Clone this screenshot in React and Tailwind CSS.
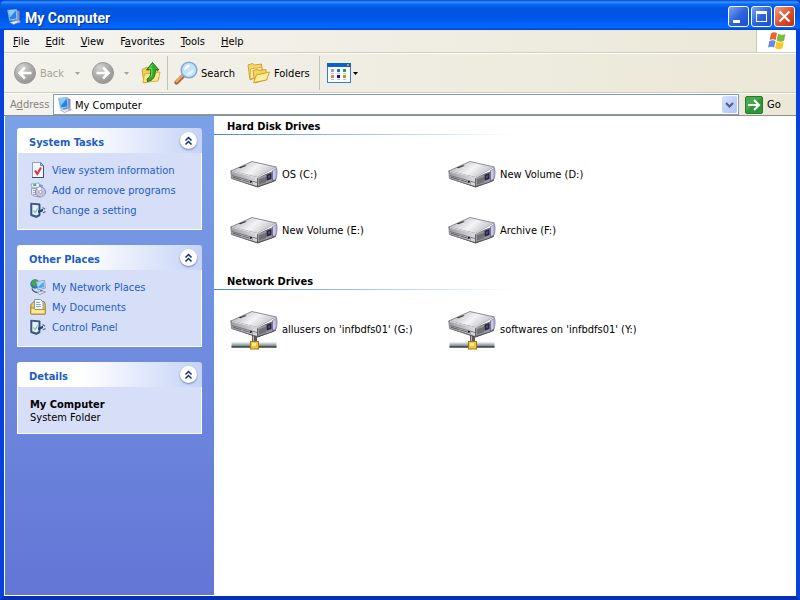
import React, { useState } from 'react';

const TASK_GROUPS = [
  {
    title: 'System Tasks',
    links: [
      { label: 'View system information', Icon: InfoIcon },
      { label: 'Add or remove programs', Icon: ProgramsIcon },
      { label: 'Change a setting', Icon: SettingIcon }
    ]
  },
  {
    title: 'Other Places',
    links: [
      { label: 'My Network Places', Icon: NetworkIcon },
      { label: 'My Documents', Icon: DocumentsIcon },
      { label: 'Control Panel', Icon: SettingIcon }
    ]
  }
];

const DRIVE_GROUPS = [
  { title: 'Hard Disk Drives', drives: ['OS (C:)', 'New Volume (D:)', 'New Volume (E:)', 'Archive (F:)'] },
  { title: 'Network Drives', network: true, drives: ["allusers on 'infbdfs01' (G:)", "softwares on 'infbdfs01' (Y:)"] }
];

// [before, underlined letter, after]
const MENUS = [
  ['', 'F', 'ile'],
  ['', 'E', 'dit'],
  ['', 'V', 'iew'],
  ['F', 'a', 'vorites'],
  ['', 'T', 'ools'],
  ['', 'H', 'elp']
];

function ComputerIcon() {
  return (
    <svg width="16" height="16" viewBox="0 0 16 16" className="shrink-0" aria-hidden="true">
      <path d="m10 1 3.500 1v9.500L10 12z" fill="#7f93bd" />
      <path d="M1.500 1.200 10.500.3l1 10.200-8 1z" fill="#c3dcf5" stroke="#6f9ad0" strokeWidth=".6" />
      <path d="m2.500 2.200 7.200-.8.8 8.200-6.500.8z" fill="#2583ea" />
      <path d="m2.500 2.200 7.200-.8L4 8.500z" fill="#86ccff" />
      <path d="m6 11 4-.5.5 1.700-4 .8z" fill="#7b89ad" />
      <path d="m3.500 13.200 8-1.800 3 1.300-7 2.800z" fill="#e9ecf6" stroke="#7d86ad" strokeWidth=".6" />
      <circle cx="12.500" cy="12.500" r="1.500" fill="#c0aecd" />
    </svg>
  );
}

function WindowsFlag() {
  return (
    <svg width="20" height="20" viewBox="0 0 20 20" aria-hidden="true">
      <path d="M4 2.500c2-1.500 4-1.400 6-.3L8.700 9C6.700 7.800 4.700 8 2.600 9z" fill="#f0602c" />
      <path d="M11 2.700c2.500 1.400 4.700 1.400 7.500.2L17 9.800c-2.500 1.300-5 1-7.300-.4z" fill="#7cbc3c" />
      <path d="M2.400 10C4.500 9 6.500 8.900 8.500 10l-1.400 6.500c-2-1.200-4-1.100-6.100 0z" fill="#5b8fe6" />
      <path d="M9.500 10.400c2.400 1.400 4.800 1.600 7.300.4l-1.400 6.500c-2.700 1.300-5 1.200-7.300-.3z" fill="#fbc625" />
    </svg>
  );
}

function RoundArrow({ back }) {
  return (
    <svg width="24" height="24" viewBox="0 0 24 24" aria-hidden="true">
      <defs>
        <radialGradient id={back ? 'gb' : 'gf'} cx=".35" cy=".25" r=".8">
          <stop offset="0" stopColor="#d2d2d0" />
          <stop offset=".6" stopColor="#a9a9a7" />
          <stop offset="1" stopColor="#939391" />
        </radialGradient>
      </defs>
      <circle cx="12" cy="12" r="10.500" fill={back ? 'url(#gb)' : 'url(#gf)'} stroke="#9a9a97" />
      <path
        d={back ? 'M18.500 12H7M12 6.500 6.500 12l5.500 5.500' : 'M5.500 12H17M12 6.500l5.500 5.500-5.500 5.500'}
        fill="none"
        stroke="#fff"
        strokeWidth="2.600"
      />
    </svg>
  );
}

function Caret({ className }) {
  return (
    <svg width="5" height="3" viewBox="0 0 5 3" className={className} aria-hidden="true">
      <path d="M0 0h5L2.500 3z" fill="currentColor" />
    </svg>
  );
}

function UpFolderIcon() {
  return (
    <svg width="22" height="24" viewBox="0 0 22 24" aria-hidden="true">
      <path d="M2 8.500 7 6l1.500 1.500L17 7l2 11-15 4z" fill="#f1cf55" stroke="#c79722" strokeWidth=".8" />
      <path d="m3 21.500 1.500-8.500 15.500-2-2 9z" fill="#ffe88a" stroke="#cf9f27" strokeWidth=".8" />
      <path d="M7.500 20.500c5.500-1 8-4.500 7.800-11.500H19L12.500 1.500 6.500 9l4.200-.3C10.800 13.500 10.500 16 7 18z" fill="#2fae2b" stroke="#126d16" strokeWidth=".9" />
      <path d="m12.500 3.500-3.500 4.300 2.800-.2c.2 3.500.1 6-1 8.200" fill="none" stroke="#7edc68" strokeWidth="1" />
    </svg>
  );
}

function SearchIcon() {
  return (
    <svg width="24" height="24" viewBox="0 0 24 24" aria-hidden="true">
      <path d="m10 14-7.500 7.500" stroke="#a9663a" strokeWidth="4.200" strokeLinecap="round" />
      <path d="m9.500 13.500-7 7" stroke="#eba66c" strokeWidth="2.200" strokeLinecap="round" />
      <circle cx="15" cy="9" r="7.800" fill="#c2e4fb" stroke="#7fa9dd" strokeWidth="1.600" />
      <path d="M10 9a5.500 5.500 0 0 1 6-5.300c-1 3-3 5-6 5.300z" fill="#fff" />
      <path d="M12 14c4 1 7-1 8-5-1 0-6 1-8 5z" fill="#e6f6ff" />
    </svg>
  );
}

function FoldersIcon() {
  return (
    <svg width="24" height="24" viewBox="0 0 24 24" aria-hidden="true">
      <path d="M1 4 5.500 2.500l2 1.500 7-1 1 11L3 19z" fill="#f6d869" stroke="#c99b28" strokeWidth=".9" />
      <path d="m3 18 .5-10L15 6l-1 9z" fill="#ffeb9b" stroke="#d0a438" strokeWidth=".8" />
      <path d="m6 10 4-2 2 1.500 7-1 1 10-12 3.500z" fill="#f4d260" stroke="#c99b28" strokeWidth=".9" />
      <path d="m6.500 21.500 3-7.500L22.500 11l-3 8z" fill="#ffec9d" stroke="#cb9a25" strokeWidth=".9" />
    </svg>
  );
}

function ViewsIcon() {
  return (
    <svg width="24" height="20" viewBox="0 0 24 20" shapeRendering="crispEdges" aria-hidden="true">
      <rect width="24" height="20" rx="1" fill="#3a7bd0" />
      <rect width="24" height="4" fill="#0c62cc" />
      <rect x="20" y="1" width="2" height="2" fill="#e88458" />
      <rect x="1" y="4" width="22" height="15" fill="#fbfdff" />
      <rect x="4" y="6" width="3" height="3" fill="#8aa6d8" />
      <rect x="10" y="6" width="3" height="3" fill="#2b6ed2" />
      <rect x="16" y="6" width="3" height="3" fill="#2f9d43" />
      <rect x="4" y="12" width="3" height="3" fill="#f08050" />
      <rect x="10" y="12" width="3" height="3" fill="#1c1478" />
      <rect x="16" y="12" width="3" height="3" fill="#b59e1c" />
      <path d="M4 10.500h3M10 10.500h3M16 10.500h3M4 16.500h3M10 16.500h3M16 16.500h3" stroke="#b9c1d2" />
    </svg>
  );
}

function GoIcon() {
  return (
    <svg width="18" height="18" viewBox="0 0 18 18" aria-hidden="true">
      <rect x=".5" y=".5" width="17" height="17" rx="1.500" fill="#2e9638" stroke="#257a2c" />
      <path d="M1 1h16L1 15z" fill="#58b35c" opacity=".6" />
      <path d="M3 9h10.500M9 4l5 5-5 5" fill="none" stroke="#fff" strokeWidth="2" />
    </svg>
  );
}

function InfoIcon() {
  return (
    <svg width="16" height="16" viewBox="0 0 16 16" className="shrink-0" aria-hidden="true">
      <path d="M2.500.5h8l3 3v12h-11z" fill="#f4f8ff" stroke="#8aa0c8" />
      <path d="M10.500.5v3h3z" fill="#a9c3ea" stroke="#4a6fae" strokeWidth=".8" />
      <path d="M2 15.500h12M13.500 4v11" stroke="#35517f" />
      <path d="m5 8.500 2.300 3.500L11 5.500" fill="none" stroke="#e0373b" strokeWidth="2.200" />
    </svg>
  );
}

function ProgramsIcon() {
  return (
    <svg width="16" height="16" viewBox="0 0 16 16" className="shrink-0" aria-hidden="true">
      <path d="m1 2 8-1 1 4-8 1z" fill="#eef5fb" stroke="#7c98bb" strokeWidth=".7" />
      <path d="m3 2.500 3-.4.5 1.700-3 .4z" fill="#43a35c" />
      <path d="m9 2 4 1-1 4-3-1z" fill="#6ea5e2" />
      <path d="M1.500 6.500h8v8.500l-6-1-2-2z" fill="#e8eef5" stroke="#79889f" strokeWidth=".7" />
      <path d="M3 8.500h4M3 10.500h4M3 12.500h3" stroke="#8996a8" strokeWidth=".8" />
      <circle cx="10.500" cy="10" r="5" fill="#cdbfe6" stroke="#7f7aa7" strokeWidth=".8" />
      <path d="M10.500 10 7 6.500A5 5 0 0 1 11 5z" fill="#f6f2ff" />
      <path d="m10.500 10 4.300 2A5 5 0 0 1 11 15z" fill="#a6d5c1" />
      <circle cx="10.500" cy="10" r="1.500" fill="#fff" stroke="#7f7aa7" strokeWidth=".6" />
    </svg>
  );
}

function SettingIcon() {
  return (
    <svg width="16" height="16" viewBox="0 0 16 16" className="shrink-0" aria-hidden="true">
      <path d="M.8 1.200 10 2v11.500L6.500 15.500l-5.700-2z" fill="#3e5c93" stroke="#29406d" strokeWidth=".8" />
      <path d="m2.300 2.700 6.200.6v9l-2 1.200-4.200-1.300z" fill="#e2f1fc" />
      <path d="m3.500 8.500 1.700 2L7.500 6.500" fill="none" stroke="#7cc07f" strokeWidth="1.100" />
      <path d="M8 9.700c2 0 3-1.500 5-1.500" stroke="#27406f" strokeWidth="2.200" fill="none" />
      <path d="m12.500 5.500 2.500 1.800M13 10.800l2.500-1.300" fill="none" stroke="#516da3" strokeWidth="1.400" />
    </svg>
  );
}

function NetworkIcon() {
  return (
    <svg width="16" height="16" viewBox="0 0 16 16" className="shrink-0" aria-hidden="true">
      <circle cx="5" cy="5" r="4.700" fill="#2c74bd" />
      <path d="M1.500 2.500C3 .5 6 0 8 2L6 4.500 5 8 2 6z" fill="#47a744" />
      <path d="m6 2.500 8.500-1 .9 7.500L8 11z" fill="#dce8f5" stroke="#7188ab" strokeWidth=".7" />
      <path d="m7.200 3.500 6.500-.8.6 5.500-5.800 1.300z" fill="#4faaf1" />
      <path d="m7.200 3.500 6.500-.8-5.500 5z" fill="#a8e0ff" />
      <path d="M10 11h2.500v1.500H10z" fill="#6f7fa3" />
      <path d="m7 13.500 6-1.500 2.500 1-6 2.500z" fill="#edeef6" stroke="#747ba0" strokeWidth=".7" />
      <path d="M2 9.500c.5 2 2 3.200 5 4" fill="none" stroke="#4d5c7b" strokeWidth="1.300" />
    </svg>
  );
}

function DocumentsIcon() {
  return (
    <svg width="16" height="16" viewBox="0 0 16 16" className="shrink-0" aria-hidden="true">
      <path d="M.8 5.500 4 2.500h10L15.200 5v10H.8z" fill="#f2c955" stroke="#8f7326" strokeWidth=".9" />
      <path d="M4.500.5h6L13 3v9H4.500z" fill="#fff" stroke="#6c8fc2" strokeWidth=".9" />
      <path d="M6 3.500h4M6 5.500h5M6 7.500h5" stroke="#6fa1dd" strokeWidth=".9" />
      <path d="M.8 9h3l1.200 1.500h10.200V15H.8z" fill="#ffe895" stroke="#a5842c" strokeWidth=".9" />
    </svg>
  );
}

function DriveIcon({ network }) {
  return (
    <svg width="48" height={network ? 42 : 28} viewBox={network ? '0 -3 48 42' : '0 -1 48 28'} className="shrink-0" aria-hidden="true">
      <defs>
        <linearGradient id="driveTop" x1="0" y1="0" x2="1" y2=".4">
          <stop offset="0" stopColor="#a9a9ad" />
          <stop offset=".6" stopColor="#f4f4f6" />
          <stop offset="1" stopColor="#c2c2c8" />
        </linearGradient>
        <linearGradient id="driveLeft" x1="0" y1="0" x2="1" y2="0">
          <stop offset="0" stopColor="#9d9da2" />
          <stop offset="1" stopColor="#dcdce0" />
        </linearGradient>
        <linearGradient id="bar" x1="0" y1="0" x2="0" y2="1">
          <stop offset="0" stopColor="#f4f6f7" />
          <stop offset="1" stopColor="#5f6b70" />
        </linearGradient>
      </defs>
      {network && (
        <g>
          <rect x="22" y="22" width="5" height="9" fill="#59595d" />
          <rect x="23" y="22" width="1" height="9" fill="#b9b9bd" />
          <path d="M1.500 31h45v5h-45z" fill="url(#bar)" />
          <path d="M1.500 36h45" stroke="#3d4649" strokeWidth="1.500" />
          <rect x="20.500" y="30.500" width="8" height="7.500" fill="#f3c62e" stroke="#a1781a" />
          <path d="M22 32h4v3h-4z" fill="#fff0a0" />
        </g>
      )}
      <path d="m1 17.500 26.500 9L45.500 20l1-3.500L28 22z" fill="#3f3f44" />
      {/* left side */}
      <path d="M.8 10 27.500 16.500v9L1.500 17.500z" fill="url(#driveLeft)" stroke="#6c6c72" strokeWidth=".7" />
      <path d="m2 14.500 25 7" stroke="#707076" strokeWidth=".9" />
      <path d="m3 16.200 20 6" stroke="#4a4a50" strokeWidth=".8" strokeDasharray="9 1" />
      <path d="M20 20.700h2" stroke="#222" strokeWidth="1.400" />
      {/* front side */}
      <path d="m27.500 16.500 15-5.700v10l-15 4.700z" fill="#98989e" stroke="#4c4c52" strokeWidth=".7" />
      <path d="m29 18.300 7-2.600v5.500L29 23.500z" fill="#707076" />
      <path d="m36.500 13.800 5-1.800v6l-5 1.700z" fill="#25253c" />
      <path d="m38 14.800 2-.8v2.700l-2 .7z" fill="#4f4a78" />
      <path d="M42.500 9.500 46.500 7c1 3 .8 8-.8 11.500l-3.200 1.700z" fill="#b4b2d6" stroke="#625f8a" strokeWidth=".6" />
      <path d="M44 9.500v8.500" stroke="#e1e0f4" strokeWidth="1" />
      {/* top */}
      <path d="m.8 10 21-9.500L46.500 6 27.500 16.500z" fill="url(#driveTop)" stroke="#75757b" strokeWidth=".8" />
      <path d="m2 10.500 25.500 6.300L45.500 7" fill="none" stroke="#fafafc" strokeWidth=".8" />
      <path d="m8.500 6.800 6.500-2.500 1.700.5-6.500 2.500z" fill="#2e2e32" />
    </svg>
  );
}

function CaptionButton({ label, close, children }) {
  return (
    <button
      aria-label={label}
      className={`flex h-[21px] w-[21px] items-center justify-center rounded-[3px] border border-white
        ${close
          ? 'bg-linear-to-br from-[#f0a08a] via-[#e0502c] to-[#b83414]'
          : 'bg-linear-to-br from-[#7ba2f4] via-[#2f63dd] to-[#1c4ccb]'}`}
    >
      <svg width="19" height="19" viewBox="0 0 19 19" aria-hidden="true">{children}</svg>
    </button>
  );
}

function TaskPanel({ title, children }) {
  const [open, setOpen] = useState(true);

  return (
    <section>
      <h2 className="flex h-[25px] items-center justify-between rounded-t-[3px] bg-linear-to-r from-white from-35% to-[#c6d3f7] pr-[5px] pl-3 text-[11px] font-bold text-[#215dc6]">
        <span className="pt-1">{title}</span>
        <button
          onClick={() => setOpen(!open)}
          aria-label={`Toggle ${title}`}
          className="flex h-[17px] w-[17px] items-center justify-center rounded-full bg-white shadow-[0_1px_2px_#7080b0]"
        >
          <svg width="9" height="10" viewBox="0 0 9 10" className={open ? '' : 'rotate-180'} aria-hidden="true">
            <path d="m1.500 4.500 3-3 3 3M1.500 8.500l3-3 3 3" fill="none" stroke="#12307d" strokeWidth="1.500" />
          </svg>
        </button>
      </h2>
      {open && <div className="border border-t-0 border-white bg-[#d6dff7]">{children}</div>}
    </section>
  );
}

export default function App() {
  const [address, setAddress] = useState('My Computer');

  return (
    <div className="flex min-h-screen flex-col bg-[#0a3fe0] font-['DejaVu_Sans_Condensed','DejaVu_Sans',sans-serif] text-[11px] leading-[13px] text-black">
      {/* Title bar */}
      <header className="flex h-[30px] shrink-0 items-center rounded-t-md bg-[linear-gradient(180deg,#0046cc_0%,#3a93ff_7%,#0a6af5_14%,#0055e0_28%,#0054e3_55%,#0062fa_78%,#0066ff_92%,#0040c8_100%)] pt-[3px] pr-[5px] pl-[6px]">
        <ComputerIcon />
        <h1 className="flex-1 pt-[2px] pl-[3px] font-[Roboto,sans-serif] text-[14px] leading-4 font-bold text-white [text-shadow:1px_1px_1px_#0b2f8c]">My Computer</h1>
        <div className="flex gap-[2px]">
          <CaptionButton label="Minimize">
            <path d="M4 13h7v3H4z" fill="#fff" />
          </CaptionButton>
          <CaptionButton label="Maximize">
            <path d="M4 4h11v11H4zM5 7v7h9V7z" fill="#fff" fillRule="evenodd" />
          </CaptionButton>
          <CaptionButton label="Close" close>
            <path d="m4.500 4.500 10 10m0-10-10 10" stroke="#fff" strokeWidth="2.200" />
          </CaptionButton>
        </div>
      </header>

      <div className="flex flex-1 flex-col border-x-4 border-b-4 border-t-0 border-[#0842dc] border-b-[#0530b4] bg-[#ece9d8]">
        {/* Menu bar */}
        <nav className="flex h-[23px] border-b border-[#d0cdbd] bg-linear-to-r from-[#f5f4f0] to-[#ebe8d7]">
          <div className="flex flex-1 items-center pl-px">
            {MENUS.map(([before, key, after]) => (
              <button key={key} className="px-2">
                {before}<u>{key}</u>{after}
              </button>
            ))}
          </div>
          <div className="flex w-10 items-center justify-center border-l border-[#c9c6b4] bg-white">
            <WindowsFlag />
          </div>
        </nav>

        {/* Toolbar */}
        <div className="flex h-10 items-center border-t border-b border-t-white border-b-[#d0cdbd] bg-linear-to-r from-[#f3f2ec] to-[#ebe8d7] pl-[9px]">
          <button disabled className="flex w-[67px] items-center text-[#a5a396]">
            <RoundArrow back />
            <span className="flex-1 pl-[3px] text-left">Back</span>
            <Caret />
          </button>
          <button disabled className="ml-[11px] flex w-[38px] items-center justify-between text-[#a5a396]">
            <RoundArrow />
            <Caret />
          </button>
          <button aria-label="Up" className="ml-[11px]">
            <UpFolderIcon />
          </button>
          <div className="ml-[5px] h-[34px] w-px bg-[#c5c2b2]" />
          <button className="ml-[6px] flex w-[73px] items-center gap-[3px]">
            <SearchIcon />
            Search
          </button>
          <button className="flex w-[67px] items-center gap-[3px]">
            <FoldersIcon />
            Folders
          </button>
          <div className="ml-[5px] h-[34px] w-px bg-[#c5c2b2]" />
          <button aria-label="Views" className="ml-[7px] flex items-center gap-[2px]">
            <ViewsIcon />
            <Caret />
          </button>
        </div>

        {/* Address bar */}
        <form onSubmit={e => e.preventDefault()} className="flex h-[23px] items-center border-t border-b border-t-white border-b-[#8f8e86] bg-linear-to-r from-[#f3f2ec] to-[#ebe8d7] pl-[6px]">
          <label htmlFor="address" className="w-[43px] text-[#858379]">
            A<u>d</u>dress
          </label>
          <div className="flex h-[21px] flex-1 items-center border border-[#7f9db9] bg-white pr-px pl-[3px]">
            <ComputerIcon />
            <input
              id="address"
              value={address}
              onChange={e => setAddress(e.target.value)}
              className="min-w-0 flex-1 bg-transparent pt-px pl-[2px] outline-none"
            />
            <button
              type="button"
              aria-label="Show addresses"
              className="flex h-[17px] w-[15px] items-center justify-center rounded-[2px] bg-linear-to-br from-[#d6e2fd] to-[#aec4f5]"
            >
              <svg width="9" height="6" viewBox="0 0 9 6" aria-hidden="true">
                <path d="m1 1 3.500 3.500L8 1" fill="none" stroke="#4d6185" strokeWidth="2" />
              </svg>
            </button>
          </div>
          <button type="submit" className="flex w-[57px] items-center gap-1 pl-[6px]">
            <GoIcon />
            Go
          </button>
        </form>

        <div className="flex flex-1">
          {/* Task pane */}
          <aside className="flex w-[210px] shrink-0 flex-col gap-[15px] border-b border-l border-white bg-linear-to-b from-[#7ba2e7] to-[#6375d6] p-3">
            {TASK_GROUPS.map(group => (
              <TaskPanel key={group.title} title={group.title}>
                <ul className="pt-[7px] pb-[9px] pl-3">
                  {group.links.map(({ label, Icon }) => (
                    <li key={label}>
                      <a href="#" className="flex h-5 items-center gap-[6px] text-[#215dc6] hover:underline">
                        <Icon />
                        {label}
                      </a>
                    </li>
                  ))}
                </ul>
              </TaskPanel>
            ))}
            <TaskPanel title="Details">
              <div className="px-3 pt-[11px] pb-[9px]">
                <p className="font-bold">My Computer</p>
                <p>System Folder</p>
              </div>
            </TaskPanel>
          </aside>

          {/* Drives */}
          <main className="flex-1 bg-white">
            {DRIVE_GROUPS.map(({ title, network, drives }) => (
              <section key={title} className="pb-[13px]">
                <h2 className="h-[18px] pt-1 pl-[13px] font-bold">{title}</h2>
                <div className="h-px w-[300px] bg-linear-to-r from-[#4a86e8] to-white" />
                <ul className="grid grid-cols-[repeat(auto-fill,218px)] pt-[11px] pl-[16px]">
                  {drives.map(name => (
                    <li key={name}>
                      <button className="flex h-14 items-center gap-1 text-left">
                        <DriveIcon network={network} />
                        {name}
                      </button>
                    </li>
                  ))}
                </ul>
              </section>
            ))}
          </main>
        </div>
      </div>
    </div>
  );
}
